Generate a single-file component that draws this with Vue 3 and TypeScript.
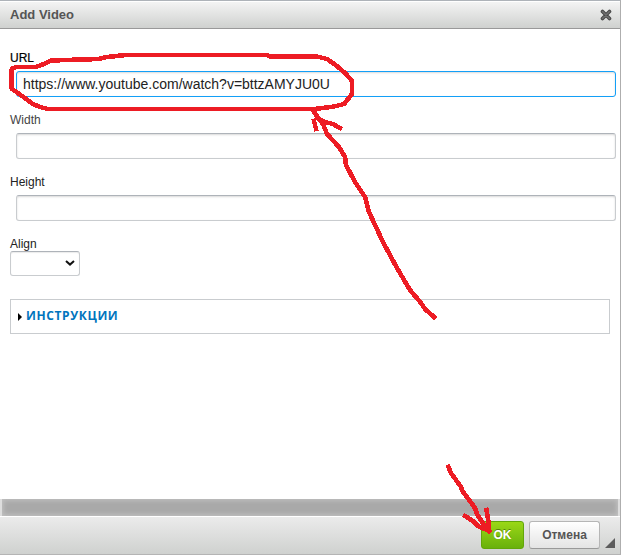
<script setup lang="ts">
import { ref } from 'vue'

const url = ref<string>('https://www.youtube.com/watch?v=bttzAMYJU0U')
const width = ref<string>('')
const height = ref<string>('')
</script>

<template>
  <div class="dialog">
    <header class="title">
      <span>Add Video</span>
      <svg class="close" width="12" height="12" viewBox="0 0 12 12">
        <path d="M2.5 2.5L9.5 9.5M9.5 2.5L2.5 9.5" stroke="#484848" stroke-width="3.6" stroke-linecap="round" />
        <path d="M2.5 2.5L9.5 9.5M9.5 2.5L2.5 9.5" stroke="#707070" stroke-width="1.6" stroke-linecap="round" />
      </svg>
    </header>

    <main class="body">
      <div class="field">
        <label class="strong">URL</label>
        <input v-model="url" class="active" type="text" />
      </div>
      <div class="field">
        <label class="soft">Width</label>
        <input v-model="width" type="text" />
      </div>
      <div class="field">
        <label>Height</label>
        <input v-model="height" type="text" />
      </div>
      <div class="field align">
        <label>Align</label>
        <div class="select">
          <svg width="10" height="6" viewBox="0 0 10 6">
            <path d="M1 1L5 4.6L9 1" fill="none" stroke="#111" stroke-width="2" />
          </svg>
        </div>
      </div>
      <section class="help">
        <svg width="4" height="8" viewBox="0 0 4 8"><path d="M0 0L4 4L0 8Z" fill="#000" /></svg>
        <span>ИНСТРУКЦИИ</span>
      </section>
    </main>

    <div class="scroll"></div>

    <footer class="footer">
      <button class="btn ok">OK</button>
      <button class="btn cancel">Отмена</button>
      <svg class="grip" width="10" height="10" viewBox="0 0 10 10"><path d="M10 0V10H0Z" fill="#5c5c5c" /></svg>
    </footer>

    <svg class="marks" width="623" height="555" viewBox="0 0 623 555">
      <path d="M315 109H48L40 107L33 104L22 96L11.5 88.5V69L16 67H36L44 64L51 60.5L98 59L107 57L126 55H267L270 56.5H317L327 59L337 66L346 74L352 81V94L344 104L334 106.5L315 109" />
      <path d="M313 110L318 118L323 124L327 134L339 147L345 157L346 165L355 182L365 197L369 212L383 242L397 268L410 290L421 303L425 309L434 317" />
      <path d="M314 121L316 129M317 118L325 122L333 124L340 128" />
      <path d="M448.500 467L451 473L461 487L462.500 491L475 508L477 514L482 522L489 531M465 516L473 521L478 526L489 531L488.500 522L486.500 510" />
    </svg>
  </div>
</template>

<style>
body {
  background: #fff;
}
</style>

<style scoped>
.dialog {
  position: relative;
  box-sizing: border-box;
  width: 621px;
  height: 555px;
  display: flex;
  flex-direction: column;
  border-top: 1px solid #aeb3b9;
  border-right: 1px solid #aeaeae;
  border-bottom: 1px solid #b4b4b4;
  font: 12px/14px "Liberation Sans", Arial, sans-serif;
  color: #222;
}
.title {
  box-sizing: border-box;
  height: 28px;
  flex: none;
  display: flex;
  align-items: center;
  justify-content: space-between;
  padding: 0 8px 0 10px;
  border-bottom: 1px solid #999;
  background: linear-gradient(#f5f5f5, #cfd1cf);
  box-shadow: inset 0 1px 0 #fff;
  font-size: 13px;
  font-weight: bold;
  color: #555;
}
.body {
  flex: 1;
  padding: 22px 4px 0 10px;
}
.field {
  height: 62px;
  display: flex;
  flex-direction: column;
}
label {
  height: 20px;
  flex: none;
}
.strong {
  color: #000;
  -webkit-text-stroke: 0.2px #000;
}
.soft {
  color: #444;
}
input {
  box-sizing: border-box;
  width: 600px;
  height: 26px;
  margin: 0 0 0 6px;
  padding: 0 6px;
  border: 1px solid #c9cccf;
  border-top-color: #aeb3b9;
  border-radius: 3px;
  outline: none;
  background: #fff;
  box-shadow: inset 0 1px 2px rgba(0, 0, 0, 0.15);
  font: 14px "Liberation Sans", Arial, sans-serif;
  color: #222;
}
input.active {
  border-color: #139ff7;
}
.align label {
  height: 14px;
}
.select {
  box-sizing: border-box;
  width: 70px;
  height: 25px;
  display: flex;
  align-items: center;
  justify-content: flex-end;
  padding: 0 4px 2px 0;
  border: 1px solid #c9cccf;
  border-top-color: #aeb3b9;
  border-radius: 3px;
  box-shadow: inset 0 1px 1px rgba(0, 0, 0, 0.08);
}
.help {
  box-sizing: border-box;
  width: 600px;
  height: 35px;
  display: flex;
  align-items: center;
  gap: 4px;
  padding: 0 7px;
  border: 1px solid #c9cccf;
  color: #0074bd;
  font: bold 12px "Open Sans", "Noto Sans", sans-serif;
  letter-spacing: 0.6px;
}
.help span {
  margin-bottom: 2px;
}
.scroll {
  height: 17px;
  flex: none;
  border-left: 2px solid #ddd;
  border-right: 2px solid #ddd;
  box-sizing: border-box;
  background: #a9a9a9;
  box-shadow: inset 0 0 5px 1px #c4c4c4;
}
.footer {
  box-sizing: border-box;
  height: 38px;
  flex: none;
  display: flex;
  justify-content: flex-end;
  padding: 4px 5px 0;
  border-top: 1px solid #fff;
  background: linear-gradient(#ebebeb, #cfd1cf);
}
.btn {
  box-sizing: border-box;
  height: 28px;
  margin: 0;
  padding: 0;
  border: 1px solid #b6b6b6;
  border-bottom-color: #999;
  border-radius: 3px;
  font: bold 12px "Liberation Sans", Arial, sans-serif;
}
.ok {
  width: 43px;
  margin-right: 5px;
  border-color: #62a60a;
  background: linear-gradient(#9ad717, #69b10b);
  color: #fff;
  text-shadow: 0 -1px 0 #55830c;
}
.cancel {
  width: 71px;
  background: linear-gradient(#fff, #e4e4e4);
  color: #555;
}
.grip {
  margin: 17px 0 0 5px;
}
.marks {
  position: absolute;
  top: -1px;
  left: 0;
  pointer-events: none;
}
.marks path {
  fill: none;
  stroke: #ed1c24;
  stroke-width: 4.6;
  stroke-linejoin: bevel;
  stroke-linecap: square;
  shape-rendering: crispEdges;
}
</style>
